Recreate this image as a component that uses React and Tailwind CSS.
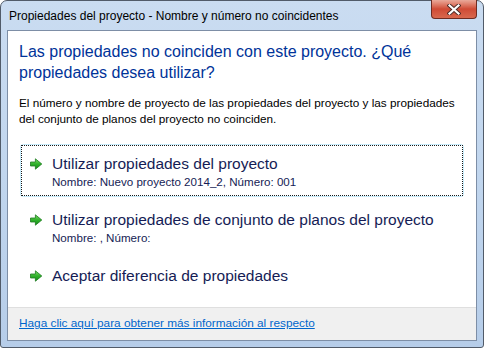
import React from "react";

const font = { fontFamily: '"Liberation Sans", Arial, sans-serif' };

const Arrow = () => (
  <svg width="14" height="12" viewBox="0 0 14 12" className="shrink-0">
    <defs>
      <linearGradient id="ag" x1="0" y1="0" x2="0" y2="1">
        <stop offset="0" stopColor="#7fdc6a" />
        <stop offset="0.5" stopColor="#2fb12a" />
        <stop offset="1" stopColor="#168a19" />
      </linearGradient>
    </defs>
    <path
      d="M1.5 4 H6.4 V0.8 L12.8 6 L6.4 11.2 V8 H1.5 Z"
      fill="url(#ag)"
      stroke="#1d7a1f"
      strokeWidth="0.8"
      strokeLinejoin="round"
    />
  </svg>
);

const CommandLink = ({ title, sub, focused }) => (
  <div className={"rounded-[3px] border " + (focused ? "border-[#c8ecfb]" : "border-transparent")}>
    <div
      className={
        "flex items-start border pl-[7px] pt-[8px] pb-[5px] " +
        (focused ? "border-dotted border-[#1a1a1a]" : "border-transparent")
      }
    >
      <div className="h-[20px] flex items-center">
        <Arrow />
      </div>
      <div className="ml-[9px] text-[#151c55]">
        <div className="text-[15.5px] leading-[20px] whitespace-nowrap">{title}</div>
        {sub !== undefined && <div className="text-[11.6px] leading-[16px] whitespace-nowrap">{sub}</div>}
      </div>
    </div>
  </div>
);

export default function App() {
  return (
    <div style={font} className="w-[484px] h-[348px] bg-white">
      <div className="w-[484px] h-[348px] flex flex-col rounded-t-[7px] rounded-b-[3px] border border-[#515b69] bg-gradient-to-b from-[#cadcf1] via-[#c1d6ee] to-[#b6cde9]">
        {/* title bar */}
        <div className="relative h-[29px] flex items-center pl-[8px] text-[12px] text-black">
          Propiedades del proyecto - Nombre y número no coincidentes
          <div className="absolute top-[-1px] right-[6px] w-[46px] h-[19px] rounded-b-[4px] border border-[#6e2c22] border-t-0 bg-gradient-to-b from-[#e9a99a] via-[#cf4a35] to-[#d8684e] flex items-center justify-center">
            <svg width="14" height="11" viewBox="0 0 14 11">
              <path d="M2.5 1.5 L11.5 9.5 M11.5 1.5 L2.5 9.5" stroke="#4a2a26" strokeWidth="4" strokeLinecap="square" />
              <path d="M2.5 1.5 L11.5 9.5 M11.5 1.5 L2.5 9.5" stroke="#ffffff" strokeWidth="2.2" strokeLinecap="square" />
            </svg>
          </div>
        </div>

        {/* client area */}
        <div className="mx-[6px] mb-[6px] flex-1 flex flex-col border border-[#7d8ea6] bg-white">
          <div className="flex-1 flex flex-col">
            <div className="pt-[10px] pl-[11px] text-[16px] leading-[21px] text-[#003399] whitespace-nowrap">
              <div>Las propiedades no coinciden con este proyecto. ¿Qué</div>
              <div>propiedades desea utilizar?</div>
            </div>
            <div className="mt-[12px] pl-[11px] text-[11.75px] leading-[16px] text-black whitespace-nowrap">
              <div>El número y nombre de proyecto de las propiedades del proyecto y las propiedades</div>
              <div>del conjunto de planos del proyecto no coinciden.</div>
            </div>
            <div className="mt-[17px] mx-[12px] flex flex-col gap-[3px]">
              <CommandLink focused title="Utilizar propiedades del proyecto" sub="Nombre: Nuevo proyecto 2014_2, Número: 001" />
              <CommandLink title="Utilizar propiedades de conjunto de planos del proyecto" sub="Nombre: , Número:" />
              <CommandLink title="Aceptar diferencia de propiedades" />
            </div>
          </div>
          <div className="h-[33px] border-t border-[#dfdfdf] bg-[#f0f0f0] flex items-center pl-[11px]">
            <span className="text-[11.8px] text-[#0066cc] underline">Haga clic aquí para obtener más información al respecto</span>
          </div>
        </div>
      </div>
    </div>
  );
}
